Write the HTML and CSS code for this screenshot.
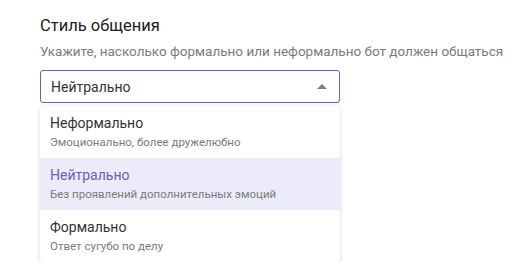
FILE: index.html
```html
<!DOCTYPE html>
<html lang="ru">
<head>
    <meta charset="UTF-8">
    <title>Стиль общения</title>
    <link rel="stylesheet" href="styles.css">
</head>
<body>
    <div class="field">
        <h3>Стиль общения</h3>
        <p class="hint">Укажите, насколько формально или неформально бот должен общаться</p>

        <div class="select">
            <div class="select-box">
                <span>Нейтрально</span>
                <span class="arrow"></span>
            </div>
            <ul class="options">
                <li>
                    <div class="opt-title">Неформально</div>
                    <div class="opt-sub">Эмоционально, более дружелюбно</div>
                </li>
                <li class="active">
                    <div class="opt-title">Нейтрально</div>
                    <div class="opt-sub">Без проявлений дополнительных эмоций</div>
                </li>
                <li>
                    <div class="opt-title">Формально</div>
                    <div class="opt-sub">Ответ сугубо по делу</div>
                </li>
            </ul>
        </div>
    </div>
</body>
</html>
```

FILE: styles.css
```css
:root {
    --accent: #6a5fc1;
    --text-color: #222;
    --muted: #7b7b7b;
    --active-bg: #ecebf9;
}

* {
    margin: 0;
    padding: 0;
    box-sizing: border-box;
}

body {
    font-family: Roboto, 'Noto Sans', sans-serif;
    background: #fff;
    color: var(--text-color);
    padding: 15px 40px 0;
}

h3 {
    font-size: 16.5px;
    font-weight: 400;
    line-height: 22px;
    margin-bottom: 5px;
}

.hint {
    font-size: 13.5px;
    color: var(--muted);
    line-height: 18px;
    margin-bottom: 10px;
    white-space: nowrap;
}

.select {
    width: 300px;
}

.select-box {
    display: flex;
    align-items: center;
    justify-content: space-between;
    height: 33px;
    padding: 0 10px;
    border: 1px solid var(--accent);
    border-radius: 3px;
    font-size: 14px;
    color: #333;
}

.arrow {
    width: 0;
    height: 0;
    border-left: 5px solid transparent;
    border-right: 5px solid transparent;
    border-bottom: 5px solid #7d7d86;
    margin-right: 2px;
}

.options {
    list-style: none;
    margin-top: 3px;
    background: #fff;
    border-radius: 4px;
    box-shadow: 0 1px 5px rgba(0, 0, 0, 0.16);
    overflow: hidden;
}

.options li {
    height: 52px;
    padding: 7px 10px 0;
}

.options li.active {
    background: var(--active-bg);
}

.opt-title {
    font-size: 14px;
    line-height: 20px;
    color: #333;
}

.active .opt-title {
    color: var(--accent);
}

.opt-sub {
    font-size: 11.5px;
    color: var(--muted);
    line-height: 18px;
}
```
